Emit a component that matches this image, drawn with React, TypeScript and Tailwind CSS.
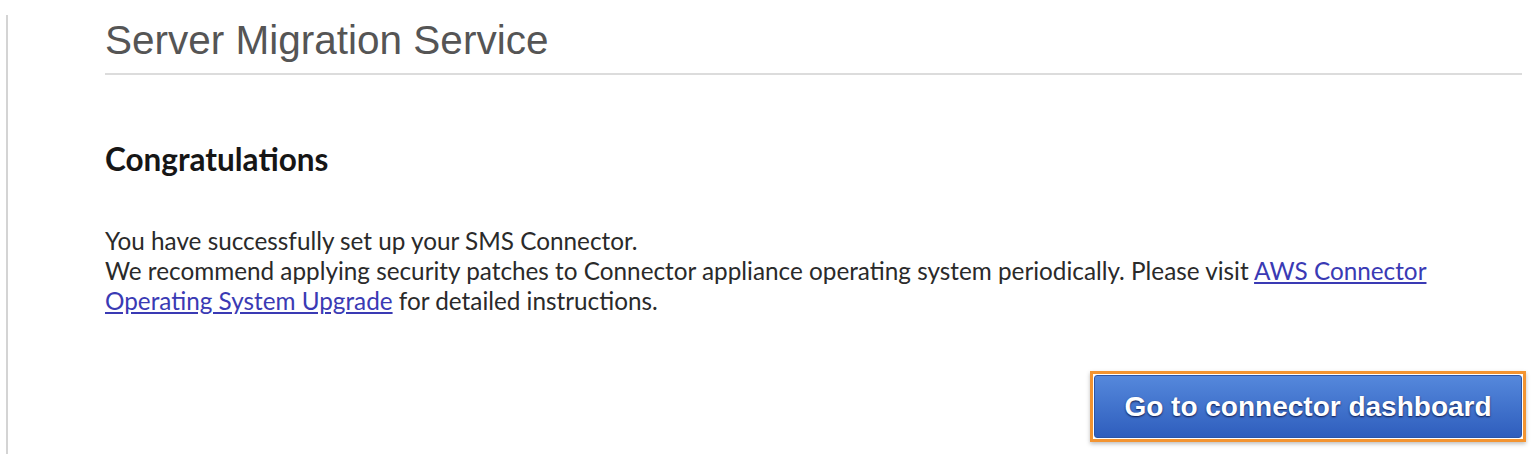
import React from "react";

export default function App() {
  return (
    <div className="w-[1532px] h-[454px] bg-white overflow-hidden flex">
      {/* left rule */}
      <div className="w-[6px] shrink-0" />
      <div className="w-[2px] shrink-0 mt-[15px] bg-[#d4d4d4]" />

      <div className="flex-1 flex flex-col pl-[97px] pr-[10px]">
        <h1
          className="text-[40.5px] leading-[46px] text-[#555555] pt-[17px] pb-[10px] border-b-2 border-[#dcdcdc]"
          style={{ fontFamily: '"Liberation Sans", Arial, sans-serif' }}
        >
          Server Migration Service
        </h1>

        <div style={{ fontFamily: 'Lato, "Open Sans", sans-serif' }}>
          <h2 className="mt-[65px] text-[31.5px] leading-[38px] font-bold text-[#161616]">
            Congratulations
          </h2>

          <div className="mt-[48px] text-[24.3px] leading-[30px] text-[#2a2a2a]">
            <p>You have successfully set up your SMS Connector.</p>
            <p>
              We recommend applying security patches to Connector appliance operating system periodically. Please visit{" "}
              <a href="#" className="text-[#3a3ab4] underline underline-offset-2">
                AWS Connector
                <br />
                Operating System Upgrade
              </a>{" "}
              for detailed instructions.
            </p>
          </div>
        </div>

        <div className="flex justify-end mt-[55px] -mr-[4px]">
          <div className="border-[3px] border-[#f39431] p-[1px] shadow-[0_2px_4px_rgba(0,0,0,0.25)]">
            <button
              className="h-[63px] w-[428px] rounded-[3px] border border-[#2c56a8] bg-gradient-to-b from-[#5588dc] to-[#2f5ebd] text-white text-[28px] font-bold [text-shadow:0_1px_2px_rgba(0,0,40,0.8)]"
              style={{ fontFamily: '"Liberation Sans", Arial, sans-serif' }}
            >
              Go to connector dashboard
            </button>
          </div>
        </div>
      </div>
    </div>
  );
}
